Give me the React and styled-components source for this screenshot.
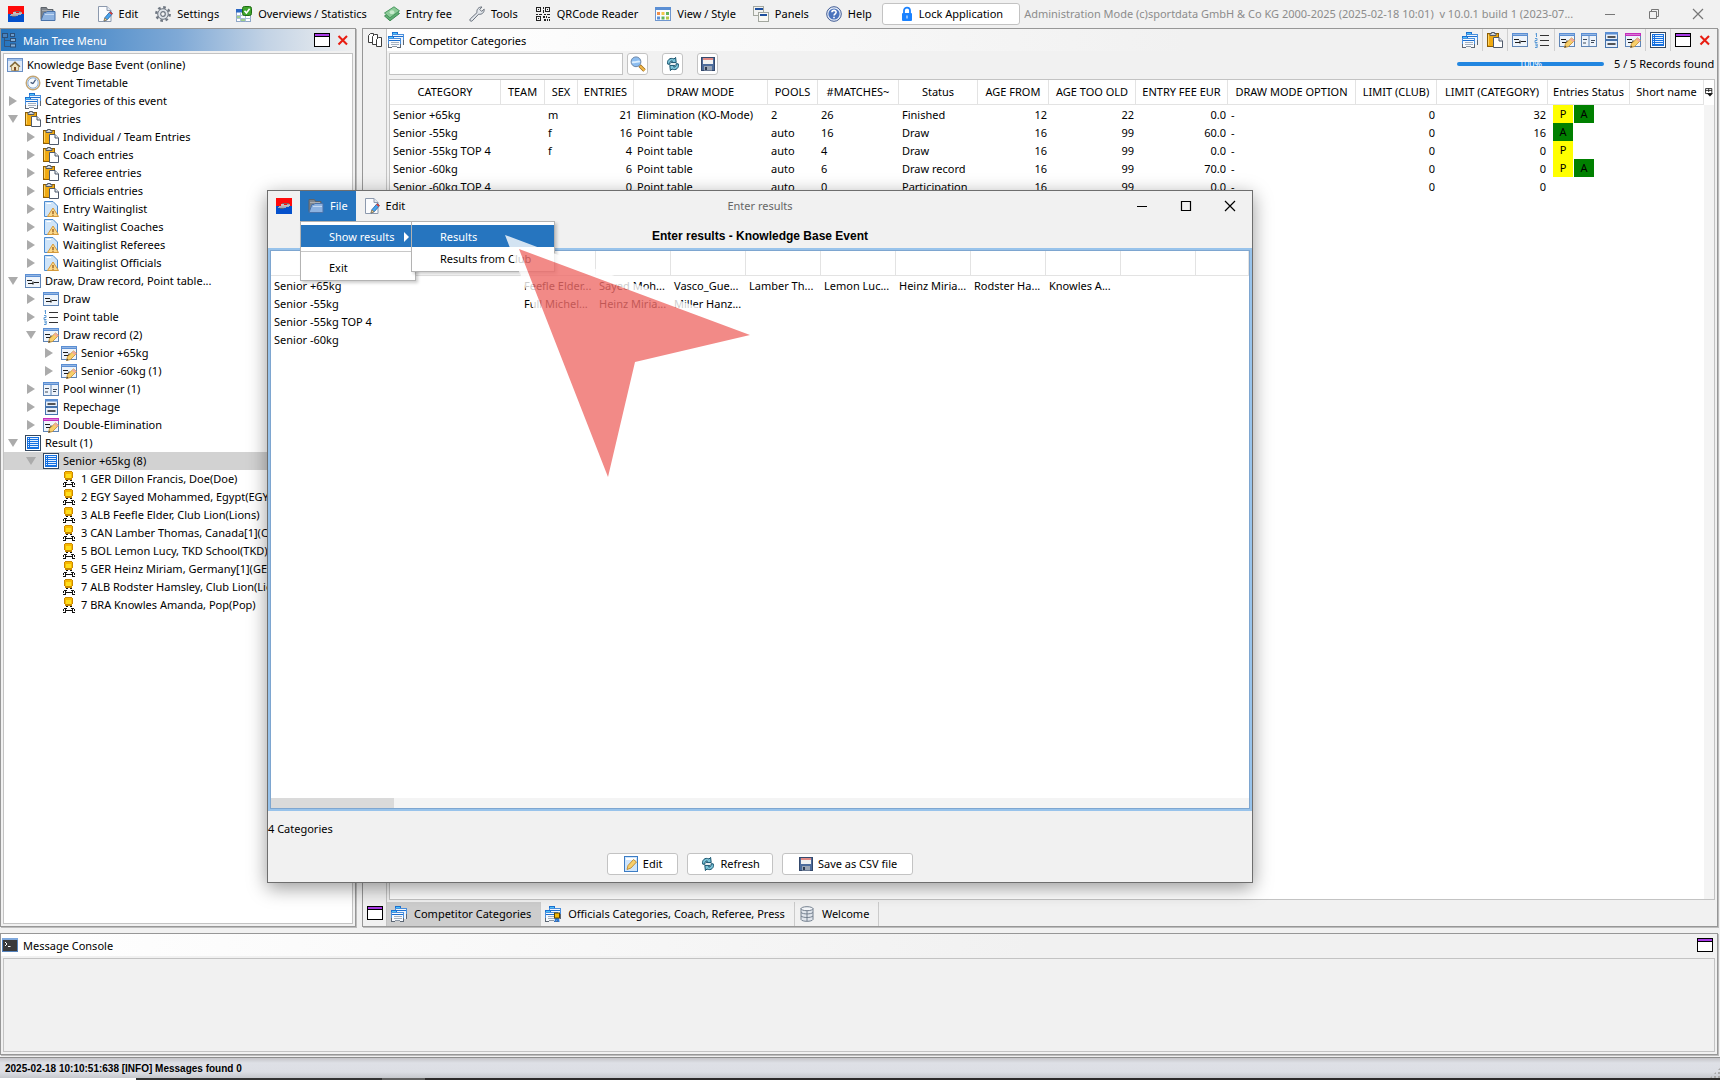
import React from "react";
import styled, { createGlobalStyle, css } from "styled-components";

const GlobalStyle = createGlobalStyle`
  *, *::before, *::after { box-sizing: border-box; }
  html, body { margin: 0; padding: 0; }
  body {
    font: 11px/18px "Noto Sans", "Open Sans", sans-serif;
    color: #000;
    background: #f1f1f1;
  }
  button, input {
    margin: 0;
    padding: 0;
    border: 0;
    font: inherit;
    color: inherit;
    background: none;
  }
  ul { list-style: none; margin: 0; padding: 0; }
`;

/* ---------- icons ---------- */

const Svg = styled.svg`
  display: block;
  flex: none;
  width: 16px;
  height: 16px;
`;

const frame = (bar = "#5b8fd4") => (
  <>
    <rect x="0.5" y="1.5" width="15" height="13" fill="#eef4fb" stroke="#5f84b4" />
    <rect x="0" y="1" width="16" height="3" fill={bar} />
    <rect x="1" y="2" width="14" height="1" fill="#fff" opacity="0.35" />
  </>
);
const pencil = (
  <>
    <path d="M5.5 15.5 6.5 11.5 12.5 6 15.5 8.5 9.5 14.5Z" fill="#f7cf6b" stroke="#c58a2a" strokeWidth="0.8" />
    <path d="M12.5 6 15.5 8.5 14 10 11 7.4Z" fill="#f2a7a0" />
    <path d="M5.3 15.7 6 13.4 7.6 15Z" fill="#444" />
  </>
);
const drawLines = (
  <path d="M2 7.5H7M3 10.5H8M8 8.5V11.5M9 9.5H14" stroke="#1c1c1c" strokeWidth="1.2" fill="none" />
);
const sheets = (
  <g shapeRendering="crispEdges">
    <rect x="4" y="0" width="6" height="3" fill="#1c6fd0" />
    <rect x="5" y="1" width="4" height="1" fill="#4cc4fb" />
    <rect x="4" y="2" width="12" height="11" fill="#4a8fdd" />
    <rect x="5" y="3" width="10" height="10" fill="#eef5fd" />
    <rect x="5" y="4" width="10" height="1" fill="#1c6fd0" />
    <rect x="0" y="4" width="6" height="3" fill="#1c6fd0" />
    <rect x="1" y="5" width="4" height="1" fill="#4cc4fb" />
    <rect x="0" y="6" width="13" height="9" fill="#4a8fdd" />
    <rect x="1" y="7" width="11" height="8" fill="#f7fafe" />
    <rect x="1" y="8" width="11" height="1" fill="#1c6fd0" />
    <rect x="3" y="10" width="8" height="1" fill="#a3b0bf" />
    <rect x="3" y="12" width="8" height="1" fill="#a3b0bf" />
    <rect x="0" y="12" width="1" height="4" fill="#5b6674" />
    <rect x="12" y="12" width="1" height="4" fill="#5b6674" />
    <rect x="1" y="15" width="3" height="1" fill="#5b6674" />
    <rect x="9" y="15" width="3" height="1" fill="#5b6674" />
    <rect x="4" y="14" width="5" height="1" fill="#8d98a6" />
    <rect x="15" y="8" width="1" height="5" fill="#5b6674" />
  </g>
);

const icons = {
  logo: (
    <g shapeRendering="crispEdges">
      <rect width="16" height="8" fill="#ff0a0a" />
      <rect y="8" width="16" height="8" fill="#0450cc" />
      <rect x="6" y="5" width="7" height="1" fill="#8f5a5a" />
      <rect x="5" y="6" width="3" height="1" fill="#c9c4c4" />
      <rect x="11" y="6" width="3" height="1" fill="#a9a3a3" />
      <rect x="5" y="7" width="9" height="1" fill="#c4bebe" />
      <rect x="3" y="8" width="10" height="1" fill="#b2b2b6" />
      <rect x="2" y="9" width="8" height="1" fill="#a4a7b0" />
      <rect x="4" y="10" width="4" height="1" fill="#56617c" />
    </g>
  ),
  folder: (
    <>
      <path d="M1 13.5V1.5H6.5L7.5 3.5H13V6" fill="#7f858c" stroke="#5d636a" />
      <path d="M2 4.5H12" stroke="#a9aeb4" />
      <path d="M1 14.5 4 6.5H6L7 5.5H15V14.5Z" fill="#8db2e0" stroke="#4a73aa" />
      <path d="M5 8.5H14" stroke="#c3d9f3" />
    </>
  ),
  pageEdit: (
    <>
      <path d="M1.5 0.5H10L14 4.5V15.5H1.5Z" fill="#fbfcfe" stroke="#8c99ad" />
      <path d="M10 0.5V4.5H14" fill="#dfe6f0" stroke="#8c99ad" />
      <path d="M7 15 8 11.5 13.2 5.5 15.6 7.5 10.4 13.6Z" fill="#4aa5ee" stroke="#1f5e9e" strokeWidth="0.8" />
      <path d="M13.2 5.5 15.6 7.5 14.6 8.7 12.2 6.7Z" fill="#e53b2c" />
      <path d="M7 15 7.8 12 10.1 13.8Z" fill="#f5d7a0" stroke="#7c5a28" strokeWidth="0.5" />
    </>
  ),
  gear: (
    <>
      <circle cx="8" cy="8" r="6.7" fill="none" stroke="#6e7681" strokeWidth="2.4" strokeDasharray="2.6 2.66" />
      <circle cx="8" cy="8" r="5.3" fill="#dfe3e8" stroke="#6e7681" />
      <circle cx="8" cy="8" r="2.3" fill="#f4f4f4" stroke="#6e7681" strokeWidth="1.2" />
    </>
  ),
  calendar: (
    <>
      <rect x="0.5" y="3.5" width="14" height="12" fill="#fff" stroke="#8ea7c8" />
      <rect x="0" y="3" width="15" height="3.5" fill="#2a67c4" />
      <path d="M0.5 9.5H14.5M0.5 12.5H14.5M4.5 6.5V15.5M9.5 6.5V15.5" stroke="#a9bdd8" />
      <rect x="1" y="10" width="3" height="2" fill="#9fd08c" />
      <rect x="5" y="13" width="4" height="2" fill="#9fd08c" />
      <rect x="6.5" y="0.5" width="9" height="9" rx="2" fill="#3fa52c" stroke="#1f6d13" />
      <path d="M8.5 4.8 10.4 7 13.6 2.8" stroke="#fff" strokeWidth="1.6" fill="none" />
    </>
  ),
  cash: (
    <>
      <path d="M0.5 10 10 3.5 15.5 7.5 6 14.8Z" fill="#5fae73" stroke="#3e8a53" />
      <path d="M0.5 7 10 0.8 15.5 4.8 6 11.8Z" fill="#8ccb98" stroke="#4a9860" />
      <ellipse cx="8" cy="6.2" rx="2.4" ry="2" fill="#c9ebcd" />
    </>
  ),
  wrench: (
    <path d="M1.2 13 8 6.6C7.4 3.4 9.6 0.8 13 1L10.8 3.4 12.6 5.4 15.2 3.2C15.4 6.6 12.8 8.8 9.6 8.2L3.2 14.9C1.8 16 0 14.4 1.2 13Z" fill="#e3e7ec" stroke="#69717c" />
  ),
  qr: (
    <g shapeRendering="crispEdges">
      <path d="M1.5 1.5h4v4h-4zM10.5 1.5h4v4h-4zM1.5 10.5h4v4h-4z" fill="none" stroke="#222" />
      <path d="M3 3h1v1h-1zM12 3h1v1h-1zM3 12h1v1h-1zM8 1h1v2h-1zM8 4h1v3h-1zM1 8h2v1h-2zM4 8h3v1h-3zM9 8h2v1h-2zM12 8h3v1h-3zM8 10h2v2h-2zM11 10h1v2h-1zM13 11h2v1h-2zM9 13h2v2h-2zM12 13h1v2h-1zM14 13h1v2h-1z" fill="#222" />
    </g>
  ),
  grid: (
    <>
      <rect x="0.5" y="1.5" width="15" height="13" fill="#fafcff" stroke="#6f97cf" />
      <rect x="0" y="1" width="16" height="3" fill="#5b8fd4" />
      <rect x="2" y="6" width="3" height="3" fill="#ef8f4a" />
      <rect x="6.5" y="6" width="3" height="3" fill="#f2c84b" />
      <rect x="11" y="6" width="3" height="3" fill="#62b35c" />
      <rect x="2" y="10.5" width="3" height="3" fill="#5c8fd6" />
      <rect x="6.5" y="10.5" width="3" height="3" fill="#62b35c" />
      <rect x="11" y="10.5" width="3" height="3" fill="#b6c84b" />
    </>
  ),
  panels: (
    <>
      <rect x="0.5" y="0.5" width="10" height="9" fill="#f2f2f0" stroke="#a3a79f" />
      <rect x="2" y="2" width="8" height="2" fill="#1d4f9e" />
      <rect x="5.5" y="6.5" width="10" height="9" fill="#f8f8f4" stroke="#a3a79f" />
      <rect x="7" y="8" width="7" height="2" fill="#1d4f9e" />
    </>
  ),
  help: (
    <>
      <circle cx="8" cy="8" r="7.3" fill="#e8eef8" stroke="#3f5a94" />
      <circle cx="8" cy="8" r="5.6" fill="#4c74bd" />
      <path d="M5.9 6.3C6 3.7 10.2 3.8 10.1 6.3C10 7.8 8 7.8 8 9.6M8 10.8V12.2" stroke="#fff" strokeWidth="1.6" fill="none" />
    </>
  ),
  lock: (
    <>
      <path d="M5 7.5V4.5C5 0.6 11 0.6 11 4.5V7.5" fill="none" stroke="#1a82ff" strokeWidth="1.8" />
      <rect x="3" y="7" width="10" height="8" rx="1" fill="#1a82ff" />
      <rect x="7.5" y="9.5" width="1" height="3" fill="#fff" />
    </>
  ),
  tree: (
    <>
      <path d="M2.5 5V14.5H8M2.5 8.5H8" stroke="#33557f" fill="none" />
      <rect x="0.5" y="1.5" width="5" height="4" fill="#4a82bd" stroke="#2d4f78" />
      <rect x="8.5" y="1.5" width="4" height="3" fill="#6b9ccc" stroke="#2d4f78" />
      <rect x="8.5" y="6.5" width="5" height="3" fill="#85aed4" stroke="#2d4f78" />
      <rect x="8.5" y="12" width="5" height="3" fill="#85aed4" stroke="#2d4f78" />
    </>
  ),
  windowBox: (
    <g shapeRendering="crispEdges">
      <rect x="0" y="1" width="16" height="14" fill="#000" />
      <rect x="1" y="2" width="14" height="2" fill="#a93be6" />
      <rect x="1" y="5" width="14" height="9" fill="#fff" />
    </g>
  ),
  redX: (
    <path d="M3.5 4 12 12.5M12 4 3.5 12.5" stroke="#e81d12" strokeWidth="2.1" />
  ),
  copies: (
    <>
      <path d="M5.5 10.5H1.5V3.5L3.5 1.5H6.5V4" fill="#fff" stroke="#3c3c3c" />
      <path d="M9.5 12.5H5.5V4.5L7.5 2.5H10.5V6" fill="#fff" stroke="#3c3c3c" />
      <path d="M9.5 14.5V7.5L11.5 5.5H14.5V14.5Z" fill="#fff" stroke="#3c3c3c" />
    </>
  ),
  sheets,
  sheetsMedal: (
    <>
      {sheets}
      <path d="M10 11 9.5 16H11L12 14 13 16H14.5L14 11Z" fill="#2a78d8" />
      <rect x="9.5" y="7" width="5" height="5" fill="#f2b90c" stroke="#5a4300" />
    </>
  ),
  home: (
    <>
      <rect x="0.5" y="1.5" width="15" height="13" fill="#dfeaf8" stroke="#6a8fc4" />
      <rect x="1" y="2" width="14" height="2" fill="#9fc0ea" />
      <path d="M4.5 9.5 8 6 11.5 9.5V13.5H4.5Z" fill="#efe2bd" stroke="#a58a55" strokeWidth="0.8" />
      <path d="M3 9.8 8 5 13 9.8" stroke="#7b6231" strokeWidth="1.2" fill="none" />
      <rect x="7" y="10" width="2" height="3.5" fill="#7b4a22" />
    </>
  ),
  clock: (
    <>
      <circle cx="8" cy="8" r="6.8" fill="#eef5fc" stroke="#c3a573" strokeWidth="1.4" />
      <circle cx="8" cy="8" r="5.2" fill="#f6fafe" stroke="#88add8" />
      <path d="M8 8.6 10.6 4.6M8 8.6 5.6 7.4" stroke="#44597c" strokeWidth="1.2" />
    </>
  ),
  clipboard: (
    <>
      <rect x="0.5" y="1.5" width="11" height="13" fill="#f0aa12" stroke="#8c5d05" />
      <path d="M1.5 13V2.5" stroke="#ffd564" />
      <path d="M3 3.5V1.5H4.5V0.5H7.5V1.5H9V3.5Z" fill="#cfd4da" stroke="#535a63" />
      <path d="M6.5 5.5H12L15.5 9V15.5H6.5Z" fill="#fff" stroke="#4f5a6b" />
      <path d="M12 5.5V9H15.5" fill="#e5eaf1" stroke="#4f5a6b" />
    </>
  ),
  waitlist: (
    <>
      <path d="M1.5 0.5H10L14.5 5V15.5H1.5Z" fill="#cfe4f8" stroke="#4b8bd0" />
      <path d="M3.5 2.5H8" stroke="#fff" />
      <path d="M10 7 15.5 15.5H4.5Z" fill="#fbd98b" stroke="#d59a3a" />
      <path d="M10 10V13M10 13.7V14.7" stroke="#8a4b10" strokeWidth="1.2" />
    </>
  ),
  draw: (
    <>
      {frame()}
      {drawLines}
    </>
  ),
  drawEdit: (
    <>
      {frame()}
      {drawLines}
      {pencil}
    </>
  ),
  drawEditPink: (
    <>
      {frame("#c52fbd")}
      {drawLines}
      {pencil}
    </>
  ),
  list: (
    <>
      <path d="M6 3.5H15M6 8.5H15M6 13.5H15" stroke="#333" strokeWidth="1.2" />
      <path d="M2.5 1V5M1.5 2H2.5M1 6.5H3V8.5H1V10.5H3.5M1 12H3.2V15.5H1M1.5 13.7H3" stroke="#5b9ad6" fill="none" />
    </>
  ),
  pool: (
    <>
      {frame()}
      <path d="M8 4V14.5" stroke="#5f84b4" />
      <path d="M2 7.5H6M2 11H5M10 8.5H14M10 10.5H13" stroke="#3f4b5c" strokeWidth="1.2" />
    </>
  ),
  repechage: (
    <>
      <rect x="2.5" y="0.5" width="12" height="7" fill="#e7effa" stroke="#4573ad" />
      <rect x="2" y="0" width="13" height="2.5" fill="#5b8fd4" />
      <rect x="2.5" y="8.5" width="12" height="7" fill="#e7effa" stroke="#4573ad" />
      <path d="M4.5 5H12.5M4.5 12H12.5" stroke="#222" strokeWidth="1.6" />
    </>
  ),
  result: (
    <g shapeRendering="crispEdges">
      <rect x="0" y="0" width="16" height="16" fill="#33475f" />
      <rect x="1" y="1" width="14" height="14" fill="#fff" />
      <rect x="2" y="2" width="12" height="12" fill="#1470e0" />
      <path d="M5 3.5H13M5 5.5H13M5 7.5H13M5 9.5H13M5 11.5H13" stroke="#e4f0ff" />
      <path d="M3.5 3V13" stroke="#e4f0ff" strokeDasharray="1 1" />
    </g>
  ),
  person: (
    <g shapeRendering="crispEdges">
      <path d="M4 0h7v1h1v6h-1v2h-7v-2h-1v-6h1z" fill="#c98a00" />
      <rect x="4" y="1" width="7" height="6" fill="#f9b800" />
      <rect x="5" y="3" width="5" height="4" fill="#ffdf1c" />
      <path d="M5 9h2v1h-2zM9 9h2v1h-2zM3 11h3v1h-3zM10 11h3v1h-3zM2 12h1v2h-1zM13 12h1v2h-1zM5 13h6v1h-6zM4 12h1v3h-1zM11 12h1v3h-1zM2 15h3v1h-3zM11 15h3v1h-3z" fill="#111" />
    </g>
  ),
  search: (
    <>
      <path d="M9.5 9.5 14.5 14.5" stroke="#9a6a1c" strokeWidth="3.4" />
      <path d="M10 10 14.5 14.5" stroke="#f2b94a" strokeWidth="2" />
      <circle cx="6" cy="5.8" r="4.9" fill="#8cbdf0" stroke="#6f88a8" />
      <path d="M2.2 5.8C5 7.6 7.5 4.5 9.8 5.8" stroke="#dceefe" strokeWidth="2" fill="none" />
    </>
  ),
  refresh: (
    <>
      <path d="M2.8 8.2C1.4 4.2 5.2 1 9 3L10.6 1.4 11.2 6.6 6.2 6.6 7.4 5C5.6 4.6 4.6 6.2 5 8.2Z" fill="#7cc4d8" stroke="#14506b" />
      <path d="M13.2 7.8C14.6 11.8 10.8 15 7 13L5.4 14.6 4.8 9.4 9.8 9.4 8.6 11C10.4 11.4 11.4 9.8 11 7.8Z" fill="#7cc4d8" stroke="#14506b" />
    </>
  ),
  floppy: (
    <>
      <rect x="1.5" y="1.5" width="13" height="13" fill="#4d6c9c" stroke="#34496c" />
      <rect x="3" y="2" width="10" height="6" fill="#f2f2f2" />
      <rect x="3" y="2" width="10" height="2" fill="#e08a86" />
      <rect x="4" y="10" width="8" height="4.5" fill="#9aa5b5" />
      <rect x="5" y="11" width="2" height="3" fill="#2e3c52" />
    </>
  ),
  noteEdit: (
    <>
      <rect x="1.5" y="0.5" width="13" height="15" fill="#cfe5fb" stroke="#3c7cc4" />
      <rect x="3" y="2" width="10" height="2" fill="#fff" />
      <path d="M4 13.5 5 9.5 10.5 3.5 13.5 6 8 12Z" fill="#f7cf6b" stroke="#b67d22" strokeWidth="0.8" />
    </>
  ),
  database: (
    <>
      <path d="M2 2.5V13.5C3 15.9 13 15.9 14 13.5V2.5" fill="#e0e5ec" stroke="#74808f" />
      <ellipse cx="8" cy="2.7" rx="6" ry="2" fill="#f4f6f9" stroke="#74808f" />
      <path d="M2 6.5C4 8.4 12 8.4 14 6.5M2 10C4 12 12 12 14 10M8 4.5V15" fill="none" stroke="#74808f" />
    </>
  ),
  console: (
    <>
      <rect x="0.5" y="1.5" width="15" height="13" fill="#3a3a3a" stroke="#5583bd" />
      <rect x="0" y="1" width="16" height="2" fill="#7fa8dc" />
      <path d="M3 5 5 7 3 9M6 9.5H8.5" stroke="#fff" fill="none" />
    </>
  ),
  columns: (
    <>
      <path d="M2.5 2.5H12.5V10.5H2.5ZM2.5 5.5H12.5M7.5 2.5V8" fill="none" stroke="#111" strokeWidth="1.3" />
      <path d="M4.5 10H14.5L9.5 15Z" fill="#111" />
    </>
  ),
  minimize: <path d="M3 8.5H13" stroke="currentColor" />,
  restore: <path d="M3.5 5.5H10.5V12.5H3.5ZM5.5 5V3.5H12.5V10.5H11" fill="none" stroke="currentColor" />,
  maximize: <path d="M3.5 3.5H12.5V12.5H3.5Z" fill="none" stroke="currentColor" strokeWidth="1.2" />,
  close: <path d="M3 3 13 13M13 3 3 13" stroke="currentColor" strokeWidth="1.2" />,
};

const Icon = ({ name }) => (
  <Svg viewBox="0 0 16 16" aria-hidden="true">
    {icons[name]}
  </Svg>
);

/* ---------- frame of the application ---------- */

const Desktop = styled.div`
  position: relative;
  display: flex;
  flex-direction: column;
  height: 100vh;
  overflow: hidden;
  white-space: nowrap;
`;

const MenuBar = styled.header`
  display: flex;
  align-items: center;
  height: 28px;
  flex: none;
  padding: 0 14px 0 8px;
  overflow: hidden;
`;

const MenuList = styled.nav`
  display: flex;
  gap: 1px;
  padding: 0 2px 0 8px;
`;

const MenuButton = styled.button`
  display: flex;
  align-items: center;
  gap: 6px;
  height: ${(p) => (p.$tall ? 30 : 26)}px;
  padding: 0 8px;
  color: ${(p) => (p.$open ? "#fff" : "#000")};
  background: ${(p) => (p.$open ? "#2675bf" : "transparent")};
`;

const PushButton = styled.button`
  display: flex;
  align-items: center;
  justify-content: center;
  gap: 4px;
  height: 22px;
  padding: 0 ${(p) => (p.$wide ? 15 : 12)}px;
  border: 1px solid #c3c3c3;
  border-radius: 3px;
  background: #fff;
`;

const LockButton = styled(PushButton)`
  padding: 0 16px;
`;

const AppTitle = styled.span`
  flex: 1;
  min-width: 0;
  padding-left: 4px;
  overflow: hidden;
  color: #8c8c8c;
  white-space: pre;
`;

const WindowControls = styled.div`
  display: flex;
  gap: 28px;
  color: ${(p) => (p.$active ? "#000" : "#777")};
`;

const Workspace = styled.main`
  display: grid;
  grid-template-columns: 356px 1fr;
  gap: 6px;
  flex: 1;
  min-height: 0;
  padding: 0 2px 6px 0;
`;

const Panel = styled.section`
  display: flex;
  flex-direction: ${(p) => (p.$row ? "row" : "column")};
  min-width: 0;
  min-height: 0;
  border: 1px solid #979797;
  box-shadow: 1px 1px 0 #bdbdbd;
`;

const TitleBar = styled.div`
  display: flex;
  align-items: center;
  gap: 5px;
  height: 22px;
  flex: none;
  padding: 0 ${(p) => (p.$flush ? 0 : 4)}px 0 1px;
  color: ${(p) => (p.$active ? "#fff" : "#000")};
  background: ${(p) =>
    p.$active
      ? "linear-gradient(to right, #2675bf, #7fa9d6 50%, #c3d3e5 75%, #f1f1f1)"
      : "linear-gradient(to right, #fff, #f1f1f1 60%)"};
`;

const TitleText = styled.h2`
  flex: 1;
  margin: 0;
  padding-top: 1px;
  font-size: 11px;
  font-weight: 400;
`;

const IconButton = styled.button`
  display: flex;
  align-items: center;
  justify-content: center;
  width: ${(p) => (p.$slim ? 16 : 22)}px;
  height: 22px;
`;

const ToolGroup = styled.div`
  display: flex;
  height: 22px;
  padding: 0 1px;
  ${(p) => !p.$last && css`border-right: 1px solid #cfcfcf;`}
`;

const Tools = styled.div`
  display: flex;
`;

/* ---------- tree ---------- */

const TreeBox = styled.div`
  flex: 1;
  min-height: 0;
  margin: 2px;
  padding-top: 2px;
  overflow: hidden;
  border: 1px solid #c3c3c3;
  background: #fff;
`;

const TreeRow = styled.button`
  display: flex;
  align-items: center;
  width: 100%;
  height: 18px;
  padding-left: ${(p) => p.$level * 18}px;
  background: ${(p) => (p.$selected ? "#d2d2d2" : "transparent")};
`;

const Disclosure = styled.span`
  display: flex;
  width: ${(p) => (p.$root ? 3 : 21)}px;
  margin-left: ${(p) => (p.$root ? 0 : -18)}px;
  padding-left: ${(p) => (p.$root ? 0 : p.$state === "closed" ? 5 : 4)}px;
  &::before {
    content: "";
    border: solid transparent;
    ${(p) => p.$state === "closed" && css`border-width: 5px 0 5px 8px; border-left-color: #ababab;`}
    ${(p) => p.$state === "open" && css`border-width: 8px 5px 0 5px; border-top-color: #ababab;`}
    ${(p) => !p.$state && css`border-width: 0;`}
  }
`;

const TreeLabel = styled.span`
  padding-left: 4px;
`;

/* ---------- categories panel ---------- */

const SideStrip = styled.div`
  display: flex;
  flex-direction: column;
  justify-content: space-between;
  width: 24px;
  flex: none;
  padding: 0 0 2px 1px;
  border-right: 1px solid #c3c3c3;
`;

const PanelBody = styled.div`
  display: flex;
  flex: 1;
  flex-direction: column;
  min-width: 0;
`;

const SearchRow = styled.div`
  display: flex;
  align-items: center;
  height: 26px;
  flex: none;
  padding-left: 2px;
`;

const SearchInput = styled.input`
  width: 234px;
  height: 22px;
  padding: 0 4px;
  border: 1px solid #c3c3c3;
  background: #fff;
`;

const SearchButtons = styled.div`
  display: flex;
  gap: 14px;
  flex: 1;
  padding-left: 4px;
`;

const SquareButton = styled.button`
  display: flex;
  align-items: center;
  justify-content: center;
  width: 21px;
  height: 22px;
  border: 1px solid #c3c3c3;
  border-radius: 3px;
  background: #fff;
`;

const Progress = styled.div`
  width: 147px;
  height: 4px;
  margin-right: 10px;
  border-radius: 2px;
  font-size: 9px;
  line-height: 4px;
  text-align: center;
  color: #fff;
  background: #2286e0;
`;

const Records = styled.span`
  width: 103px;
`;

const TableFrame = styled.div`
  display: flex;
  flex: 1;
  min-height: 0;
  margin: 2px;
  border: 1px solid #c3c3c3;
  background: #fff;
`;

const TableScroll = styled.div`
  flex: 1;
  min-width: 0;
  overflow: hidden;
`;

const Gutter = styled.div`
  width: 10px;
  background: linear-gradient(#fff 25px, #f4f4f4 25px);
`;

const ColumnControl = styled.button`
  display: flex;
  align-items: center;
  width: 10px;
  height: 24px;
  svg { width: 10px; height: 14px; }
`;

const DataTable = styled.table`
  width: 100%;
  table-layout: fixed;
  border-collapse: separate;
  border-spacing: 0;
`;

const Col = styled.col`
  width: ${(p) => (p.$w ? `${p.$w}px` : "auto")};
`;

const HeadCell = styled.th`
  height: 25px;
  padding: 0;
  overflow: hidden;
  border-right: 1px solid #e3e3e3;
  border-bottom: 1px solid #e3e3e3;
  font-weight: 400;
  text-align: center;
`;

const Cell = styled.td`
  height: 18px;
  padding: ${(p) => (p.$flush ? 0 : 1)}px 2px 0 3px;
  overflow: hidden;
  line-height: 17px;
  text-align: ${(p) => (p.$right ? "right" : "left")};
`;

const BadgeRow = styled.div`
  display: flex;
  gap: 1px;
  padding-left: 2px;
`;

const Badge = styled.span`
  width: 20px;
  height: 18px;
  line-height: 18px;
  text-align: center;
  background: ${(p) => (p.$kind === "P" ? "#ff0" : "#008000")};
`;

const TabBar = styled.div`
  display: flex;
  height: 24px;
  flex: none;
`;

const Tab = styled.button`
  display: flex;
  align-items: center;
  gap: 7px;
  height: 24px;
  padding: 0 9px 0 4px;
  border-right: 1px solid #cbcbcb;
  background: ${(p) => (p.$active ? "#cdcdcd" : "transparent")};
`;

/* ---------- console and status ---------- */

const ConsolePanel = styled(Panel)`
  flex: none;
  height: 122px;
  margin-right: 2px;
`;

const ConsoleBox = styled.div`
  flex: 1;
  margin: 2px;
  border: 1px solid #c3c3c3;
`;

const StatusBar = styled.footer`
  display: flex;
  align-items: center;
  justify-content: space-between;
  height: 21px;
  flex: none;
  margin-top: 2px;
  padding: 1px 0 0 5px;
  border-top: 1px solid #8d8d8d;
  font: bold 10px/18px "Liberation Sans", Arial, sans-serif;
  background: linear-gradient(#c4c4c8, #dee0e6 25%, #dcdee4 70%, #c6c8cd);
`;

const Grip = styled.span`
  align-self: flex-end;
  width: 10px;
  height: 10px;
  background: radial-gradient(circle at 1px 1px, #a8a8a8 1px, transparent 1px) 0 0 / 4px 4px;
  clip-path: polygon(100% 0, 100% 100%, 0 100%);
`;

const TaskbarEdge = styled.div`
  height: 2px;
  flex: none;
  background: linear-gradient(to right, #fff 136px, #333 136px, #333 382px, #606060 382px, #606060 425px, #2c2a2a 425px);
`;

/* ---------- results window ---------- */

const Dialog = styled.section`
  position: absolute;
  inset: 190px 467px 197px 267px;
  display: flex;
  flex-direction: column;
  border: 1px solid #6e6e6e;
  background: #f1f1f1;
  box-shadow: 0 5px 18px rgba(0, 0, 0, 0.4);
`;

const DialogBar = styled.header`
  display: grid;
  grid-template-columns: 1fr auto 1fr;
  align-items: center;
  height: 30px;
  flex: none;
`;

const DialogMenus = styled.nav`
  display: flex;
  align-items: center;
  padding-left: 8px;
`;

const MenuAnchor = styled.div`
  position: relative;
  margin-left: 8px;
`;

const DialogTitle = styled.span`
  color: #666;
`;

const DialogControls = styled(WindowControls)`
  justify-content: flex-end;
  padding-right: 14px;
`;

const Heading = styled.h1`
  height: 27px;
  flex: none;
  margin: 0;
  padding-top: 4px;
  font: bold 12px/22px "Liberation Sans", Arial, sans-serif;
  text-align: center;
`;

const ResultFrame = styled.div`
  display: flex;
  flex: 1;
  flex-direction: column;
  min-height: 0;
  border: 2px solid #98c3eb;
  outline: 1px solid #7ea6d0;
  outline-offset: -3px;
  padding: 1px;
  background: #fff;
`;

const ScrollTrack = styled.div`
  height: 10px;
  flex: none;
  background: #f4f4f4;
`;

const ScrollThumb = styled.div`
  width: 123px;
  height: 10px;
  background: #dadada;
`;

const Count = styled.p`
  margin: 9px 0 15px;
`;

const DialogButtons = styled.div`
  display: flex;
  justify-content: center;
  gap: 9px;
  padding-bottom: 7px;
`;

const Popup = styled.ul`
  position: absolute;
  top: ${(p) => (p.$sub ? "-4px" : "30px")};
  left: ${(p) => (p.$sub ? "110px" : "0")};
  z-index: 2;
  width: ${(p) => (p.$sub ? 144 : 116)}px;
  padding: 3px 0 2px;
  border: 1px solid #b3b3b3;
  background: #fff;
  box-shadow: 2px 2px 3px rgba(0, 0, 0, 0.2);
`;

const PopupItem = styled.li`
  position: relative;
`;

const PopupButton = styled.button`
  display: flex;
  align-items: center;
  width: 100%;
  height: 22px;
  padding: 1px 6px 0 28px;
  text-align: left;
  color: ${(p) => (p.$active ? "#fff" : "#000")};
  background: ${(p) => (p.$active ? "#2675bf" : "transparent")};
`;

const SubArrow = styled.span`
  margin-left: auto;
  border: solid transparent;
  border-width: 5px 0 5px 5px;
  border-left-color: #fff;
`;

const PopupRule = styled.li`
  height: 9px;
  background: linear-gradient(#c8c8c8, #c8c8c8) 0 4px / 100% 1px no-repeat;
`;

const Pointer = styled.svg`
  position: absolute;
  top: 40px;
  left: 232px;
  z-index: 3;
  width: 280px;
  height: 280px;
  opacity: 0.8;
  pointer-events: none;
`;

/* ---------- data ---------- */

const menus = [
  ["folder", "File"],
  ["pageEdit", "Edit"],
  ["gear", "Settings"],
  ["calendar", "Overviews / Statistics"],
  ["cash", "Entry fee"],
  ["wrench", "Tools"],
  ["qr", "QRCode Reader"],
  ["grid", "View / Style"],
  ["panels", "Panels"],
  ["help", "Help"],
];

const tree = [
  [0, null, "home", "Knowledge Base Event (online)"],
  [1, null, "clock", "Event Timetable"],
  [1, "closed", "sheets", "Categories of this event"],
  [1, "open", "clipboard", "Entries"],
  [2, "closed", "clipboard", "Individual / Team Entries"],
  [2, "closed", "clipboard", "Coach entries"],
  [2, "closed", "clipboard", "Referee entries"],
  [2, "closed", "clipboard", "Officials entries"],
  [2, "closed", "waitlist", "Entry Waitinglist"],
  [2, "closed", "waitlist", "Waitinglist Coaches"],
  [2, "closed", "waitlist", "Waitinglist Referees"],
  [2, "closed", "waitlist", "Waitinglist Officials"],
  [1, "open", "draw", "Draw, Draw record, Point table..."],
  [2, "closed", "draw", "Draw"],
  [2, "closed", "list", "Point table"],
  [2, "open", "drawEdit", "Draw record (2)"],
  [3, "closed", "drawEdit", "Senior +65kg"],
  [3, "closed", "drawEdit", "Senior -60kg (1)"],
  [2, "closed", "pool", "Pool winner (1)"],
  [2, "closed", "repechage", "Repechage"],
  [2, "closed", "drawEditPink", "Double-Elimination"],
  [1, "open", "result", "Result (1)"],
  [2, "open", "result", "Senior +65kg (8)", true],
  [3, null, "person", "1 GER Dillon Francis, Doe(Doe)"],
  [3, null, "person", "2 EGY Sayed Mohammed, Egypt(EGY)"],
  [3, null, "person", "3 ALB Feefle Elder, Club Lion(Lions)"],
  [3, null, "person", "3 CAN Lamber Thomas, Canada[1](CAN)"],
  [3, null, "person", "5 BOL Lemon Lucy, TKD School(TKD)"],
  [3, null, "person", "5 GER Heinz Miriam, Germany[1](GER)"],
  [3, null, "person", "7 ALB Rodster Hamsley, Club Lion(Lions)"],
  [3, null, "person", "7 BRA Knowles Amanda, Pop(Pop)"],
];

const toolGroups = [
  [["sheets", "Categories"]],
  [["clipboard", "Entries"]],
  [["draw", "Draw"], ["list", "Point table"]],
  [["drawEdit", "Draw record"], ["pool", "Pool winner"], ["repechage", "Repechage"], ["drawEditPink", "Double-Elimination"]],
  [["result", "Result"]],
  [["windowBox", "Maximize panel"], ["redX", "Close panel"]],
];

const columns = [
  ["CATEGORY", 111],
  ["TEAM", 44],
  ["SEX", 33],
  ["ENTRIES", 56, true],
  ["DRAW MODE", 134],
  ["POOLS", 50],
  ["#MATCHES~", 81],
  ["Status", 79],
  ["AGE FROM", 71, true],
  ["AGE TOO OLD", 87, true],
  ["ENTRY FEE EUR", 92, true],
  ["DRAW MODE OPTION", 128],
  ["LIMIT (CLUB)", 81, true],
  ["LIMIT (CATEGORY)", 111, true],
  ["Entries Status", 82],
  ["Short name", 0],
];

const categories = [
  ["Senior +65kg", "", "m", "21", "Elimination (KO-Mode)", "2", "26", "Finished", "12", "22", "0.0", "-", "0", "32", "PA", ""],
  ["Senior -55kg", "", "f", "16", "Point table", "auto", "16", "Draw", "16", "99", "60.0", "-", "0", "16", "A", ""],
  ["Senior -55kg TOP 4", "", "f", "4", "Point table", "auto", "4", "Draw", "16", "99", "0.0", "-", "0", "0", "P", ""],
  ["Senior -60kg", "", "", "6", "Point table", "auto", "6", "Draw record", "16", "99", "70.0", "-", "0", "0", "PA", ""],
  ["Senior -60kg TOP 4", "", "", "0", "Point table", "auto", "0", "Participation", "16", "99", "0.0", "-", "0", "0", "", ""],
];
const statusColumn = 14;

const results = [
  ["Senior +65kg", "Feefle Elder...", "Sayed Moh...", "Vasco_Gue...", "Lamber Th...", "Lemon Luc...", "Heinz Miria...", "Rodster Ha...", "Knowles A...", "", "", ""],
  ["Senior -55kg", "Full Michel...", "Heinz Miria...", "Miller Hanz...", "", "", "", "", "", "", "", ""],
  ["Senior -55kg TOP 4", "", "", "", "", "", "", "", "", "", "", ""],
  ["Senior -60kg", "", "", "", "", "", "", "", "", "", "", ""],
];
const resultWidths = [250, 75, 75, 75, 75, 75, 75, 75, 75, 75, 0];

/* ---------- views ---------- */

function MainMenu() {
  return (
    <MenuBar>
      <Icon name="logo" />
      <MenuList>
        {menus.map(([icon, label]) => (
          <MenuButton key={label}>
            <Icon name={icon} />
            {label}
          </MenuButton>
        ))}
      </MenuList>
      <LockButton>
        <Icon name="lock" />
        Lock Application
      </LockButton>
      <AppTitle>
        {"Administration Mode (c)sportdata GmbH & Co KG 2000-2025 (2025-02-18 10:01)  v 10.0.1 build 1 (2023-07..."}
      </AppTitle>
      <WindowControls>
        <button aria-label="Minimize"><Icon name="minimize" /></button>
        <button aria-label="Restore"><Icon name="restore" /></button>
        <button aria-label="Close"><Icon name="close" /></button>
      </WindowControls>
    </MenuBar>
  );
}

function TreePanel() {
  return (
    <Panel>
      <TitleBar $active>
        <Icon name="tree" />
        <TitleText>Main Tree Menu</TitleText>
        <IconButton $slim aria-label="Maximize tree"><Icon name="windowBox" /></IconButton>
        <IconButton $slim aria-label="Close tree"><Icon name="redX" /></IconButton>
      </TitleBar>
      <TreeBox>
        <ul>
          {tree.map(([level, state, icon, label, selected], i) => (
            <li key={i}>
              <TreeRow $level={level} $selected={selected}>
                <Disclosure $state={state} $root={level === 0} />
                <Icon name={icon} />
                <TreeLabel>{label}</TreeLabel>
              </TreeRow>
            </li>
          ))}
        </ul>
      </TreeBox>
    </Panel>
  );
}

function CategoryTable() {
  return (
    <TableFrame>
      <TableScroll>
        <DataTable>
          <colgroup>
            {columns.map(([label, w]) => <Col key={label} $w={w} />)}
          </colgroup>
          <thead>
            <tr>
              {columns.map(([label]) => <HeadCell key={label}>{label}</HeadCell>)}
            </tr>
          </thead>
          <tbody>
            {categories.map((row) => (
              <tr key={row[0]}>
                {row.map((value, i) => (
                  <Cell key={i} $right={columns[i][2]} $flush={i === statusColumn}>
                    {i === statusColumn ? (
                      <BadgeRow>
                        {value.split("").map((kind) => <Badge key={kind} $kind={kind}>{kind}</Badge>)}
                      </BadgeRow>
                    ) : value}
                  </Cell>
                ))}
              </tr>
            ))}
          </tbody>
        </DataTable>
      </TableScroll>
      <Gutter>
        <ColumnControl aria-label="Choose columns"><Icon name="columns" /></ColumnControl>
      </Gutter>
    </TableFrame>
  );
}

function CategoryPanel() {
  return (
    <Panel $row>
      <SideStrip>
        <IconButton aria-label="Panel list"><Icon name="copies" /></IconButton>
        <IconButton aria-label="Restore panel"><Icon name="windowBox" /></IconButton>
      </SideStrip>
      <PanelBody>
        <TitleBar $flush>
          <Icon name="sheets" />
          <TitleText>Competitor Categories</TitleText>
          <Tools>
            {toolGroups.map((group, g) => (
              <ToolGroup key={g} $last={g === toolGroups.length - 1}>
                {group.map(([icon, label]) => (
                  <IconButton key={label} aria-label={label}><Icon name={icon} /></IconButton>
                ))}
              </ToolGroup>
            ))}
          </Tools>
        </TitleBar>
        <SearchRow>
          <SearchInput type="text" aria-label="Search categories" />
          <SearchButtons>
            <SquareButton aria-label="Search"><Icon name="search" /></SquareButton>
            <SquareButton aria-label="Refresh list"><Icon name="refresh" /></SquareButton>
            <SquareButton aria-label="Save list"><Icon name="floppy" /></SquareButton>
          </SearchButtons>
          <Progress>100%</Progress>
          <Records>5 / 5 Records found</Records>
        </SearchRow>
        <CategoryTable />
        <TabBar>
          <Tab $active><Icon name="sheets" />Competitor Categories</Tab>
          <Tab><Icon name="sheetsMedal" />Officials Categories, Coach, Referee, Press</Tab>
          <Tab><Icon name="database" />Welcome</Tab>
        </TabBar>
      </PanelBody>
    </Panel>
  );
}

function ResultsDialog() {
  return (
    <Dialog aria-label="Enter results">
      <DialogBar>
        <DialogMenus>
          <Icon name="logo" />
          <MenuAnchor>
            <MenuButton $tall $open><Icon name="folder" />File</MenuButton>
            <Popup>
              <PopupItem>
                <PopupButton $active>Show results<SubArrow /></PopupButton>
                <Popup $sub>
                  <PopupItem><PopupButton $active>Results</PopupButton></PopupItem>
                  <PopupItem><PopupButton>Results from Club</PopupButton></PopupItem>
                </Popup>
              </PopupItem>
              <PopupRule />
              <PopupItem><PopupButton>Exit</PopupButton></PopupItem>
            </Popup>
          </MenuAnchor>
          <MenuButton $tall><Icon name="pageEdit" />Edit</MenuButton>
        </DialogMenus>
        <DialogTitle>Enter results</DialogTitle>
        <DialogControls $active>
          <button aria-label="Minimize window"><Icon name="minimize" /></button>
          <button aria-label="Maximize window"><Icon name="maximize" /></button>
          <button aria-label="Close window"><Icon name="close" /></button>
        </DialogControls>
      </DialogBar>
      <Heading>Enter results - Knowledge Base Event</Heading>
      <ResultFrame>
        <TableScroll>
          <DataTable>
            <colgroup>
              {resultWidths.map((w, i) => <Col key={i} $w={w} />)}
            </colgroup>
            <thead>
              <tr>
                {resultWidths.map((_, i) => <HeadCell key={i} />)}
              </tr>
            </thead>
            <tbody>
              {results.map((row) => (
                <tr key={row[0]}>
                  {resultWidths.map((_, i) => <Cell key={i}>{row[i]}</Cell>)}
                </tr>
              ))}
            </tbody>
          </DataTable>
        </TableScroll>
        <ScrollTrack><ScrollThumb /></ScrollTrack>
      </ResultFrame>
      <Count>4 Categories</Count>
      <DialogButtons>
        <PushButton $wide><Icon name="noteEdit" />Edit</PushButton>
        <PushButton><Icon name="refresh" />Refresh</PushButton>
        <PushButton $wide><Icon name="floppy" />Save as CSV file</PushButton>
      </DialogButtons>
      <Pointer viewBox="0 0 280 280" aria-hidden="true">
        <path d="M5 4 275 105 141 137 108 271Z" fill="#fff" />
        <path d="M19 18 250 104 135 131 108 246Z" fill="#ef6d6a" />
      </Pointer>
    </Dialog>
  );
}

export default function App() {
  return (
    <>
      <GlobalStyle />
      <Desktop>
        <MainMenu />
        <Workspace>
          <TreePanel />
          <CategoryPanel />
        </Workspace>
        <ConsolePanel>
          <TitleBar>
            <Icon name="console" />
            <TitleText>Message Console</TitleText>
            <IconButton $slim aria-label="Maximize console"><Icon name="windowBox" /></IconButton>
          </TitleBar>
          <ConsoleBox />
        </ConsolePanel>
        <StatusBar>
          <span>2025-02-18 10:10:51:638 [INFO] Messages found 0</span>
          <Grip />
        </StatusBar>
        <TaskbarEdge />
        <ResultsDialog />
      </Desktop>
    </>
  );
}
